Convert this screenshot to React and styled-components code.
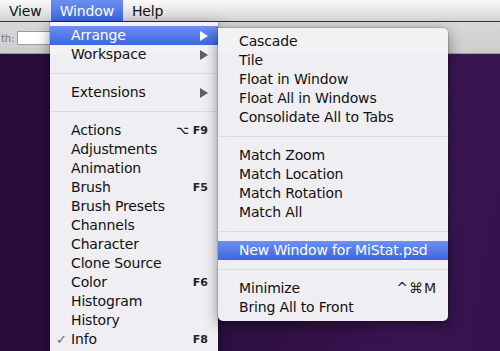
import React from 'react';
import styled, { createGlobalStyle, css } from 'styled-components';

const GlobalStyle = createGlobalStyle`
  html, body {
    margin: 0;
    padding: 0;
    width: 500px;
    height: 351px;
    overflow: hidden;
  }
  body {
    font-family: "DejaVu Sans", "Lucida Grande", sans-serif;
    font-size: 14px;
    letter-spacing: -0.15px;
  }
`;

const Screen = styled.div`
  width: 500px;
  height: 351px;
  display: flex;
  flex-direction: column;
  position: relative;
  overflow: hidden;
  background: #2b0e3e;
`;

const MenuBar = styled.div`
  height: 21px;
  flex: none;
  display: flex;
  align-items: stretch;
  background: linear-gradient(#fbfbfb, #e6e6e6 50%, #d4d4d4);
  border-bottom: 1px solid #3a2a44;
`;

const MenuTitle = styled.div`
  display: flex;
  align-items: center;
  padding: 0 9px;
  color: #111;
  ${p => p.$open && css`
    color: #fff;
    background: linear-gradient(#6c8ff1, #3e66e0);
  `}
`;

const Toolbar = styled.div`
  height: 31px;
  flex: none;
  display: flex;
  align-items: center;
  gap: 3px;
  padding-left: 1px;
  background: linear-gradient(#d8d8d8, #cdcdcd);
  border-bottom: 1px solid #9a9a9a;
  box-shadow: 0 1px 1px rgba(0, 0, 0, 0.4);
`;

const FieldLabel = styled.span`
  font-size: 10px;
  color: #777;
  padding-top: 2px;
`;

const Field = styled.div`
  width: 40px;
  height: 12px;
  background: #fff;
  border: 1px solid #9c9c9c;
`;

const Desktop = styled.div`
  flex: 1;
  background: linear-gradient(100deg, #2a0c3b 0%, #2d0f40 50%, #3a1552 85%, #35124b 100%);
`;

const Menu = styled.div`
  position: absolute;
  left: ${p => p.$left}px;
  top: ${p => p.$top}px;
  width: ${p => p.$width}px;
  padding: 4px 0;
  background: rgba(243, 243, 246, 0.98);
  box-shadow: 0 4px 14px rgba(0, 0, 0, 0.45), 0 0 0 1px rgba(0, 0, 0, 0.12);
  border-radius: ${p => (p.$sub ? '0 5px 5px 5px' : '0 0 5px 5px')};
  z-index: ${p => (p.$sub ? 2 : 1)};
  ${p => p.$tall && css`padding-bottom: 40px;`}
`;

const Item = styled.div`
  height: 19px;
  line-height: 19px;
  display: flex;
  align-items: center;
  padding: 0 ${p => p.$right}px 0 21px;
  position: relative;
  color: #111;
  white-space: nowrap;
  ${p => p.$active && css`
    color: #fff;
    background: linear-gradient(#6d90f1, #3c65e0);
  `}
`;

const Label = styled.span`
  flex: 1;
`;

const Check = styled.span`
  position: absolute;
  left: 6px;
  color: #6a6a6a;
  font-size: 13px;
`;

const Shortcut = styled.span`
  font-size: ${p => (p.$bold ? '11px' : '14px')};
  font-weight: ${p => (p.$bold ? 700 : 400)};
  color: #222;
  letter-spacing: ${p => (p.$bold ? '0' : '1px')};
`;

const Arrow = styled.span`
  width: 0;
  height: 0;
  border-top: 5px solid transparent;
  border-bottom: 5px solid transparent;
  border-left: 8px solid ${p => (p.$active ? '#fff' : '#5e5e5e')};
`;

const Separator = styled.div`
  height: 19px;
  display: flex;
  align-items: center;
  &::after {
    content: '';
    flex: 1;
    height: 1px;
    background: #dadade;
  }
`;

const windowItems = [
  { label: 'Arrange', sub: true, active: true },
  { label: 'Workspace', sub: true },
  { sep: true },
  { label: 'Extensions', sub: true },
  { sep: true },
  { label: 'Actions', key: '⌥ F9' },
  { label: 'Adjustments' },
  { label: 'Animation' },
  { label: 'Brush', key: 'F5' },
  { label: 'Brush Presets' },
  { label: 'Channels' },
  { label: 'Character' },
  { label: 'Clone Source' },
  { label: 'Color', key: 'F6' },
  { label: 'Histogram' },
  { label: 'History' },
  { label: 'Info', key: 'F8', checked: true },
];

const arrangeItems = [
  { label: 'Cascade' },
  { label: 'Tile' },
  { label: 'Float in Window' },
  { label: 'Float All in Windows' },
  { label: 'Consolidate All to Tabs' },
  { sep: true },
  { label: 'Match Zoom' },
  { label: 'Match Location' },
  { label: 'Match Rotation' },
  { label: 'Match All' },
  { sep: true },
  { label: 'New Window for MiStat.psd', active: true },
  { sep: true },
  { label: 'Minimize', key: '^⌘M', plain: true },
  { label: 'Bring All to Front' },
];

function MenuItems({ items, right }) {
  return items.map((it, i) =>
    it.sep ? (
      <Separator key={i} />
    ) : (
      <Item key={i} $active={it.active} $right={right}>
        {it.checked && <Check>✓</Check>}
        <Label>{it.label}</Label>
        {it.key && <Shortcut $bold={!it.plain}>{it.key}</Shortcut>}
        {it.sub && <Arrow $active={it.active} />}
      </Item>
    )
  );
}

export default function App() {
  return (
    <>
      <GlobalStyle />
      <Screen>
        <MenuBar>
          <MenuTitle>View</MenuTitle>
          <MenuTitle $open>Window</MenuTitle>
          <MenuTitle>Help</MenuTitle>
        </MenuBar>
        <Toolbar>
          <FieldLabel>th:</FieldLabel>
          <Field />
        </Toolbar>
        <Desktop />

        <Menu $left={50} $top={22} $width={168} $tall>
          <MenuItems items={windowItems} right={10} />
        </Menu>
        <Menu $left={218} $top={28} $width={230} $sub>
          <MenuItems items={arrangeItems} right={11} />
        </Menu>
      </Screen>
    </>
  );
}
